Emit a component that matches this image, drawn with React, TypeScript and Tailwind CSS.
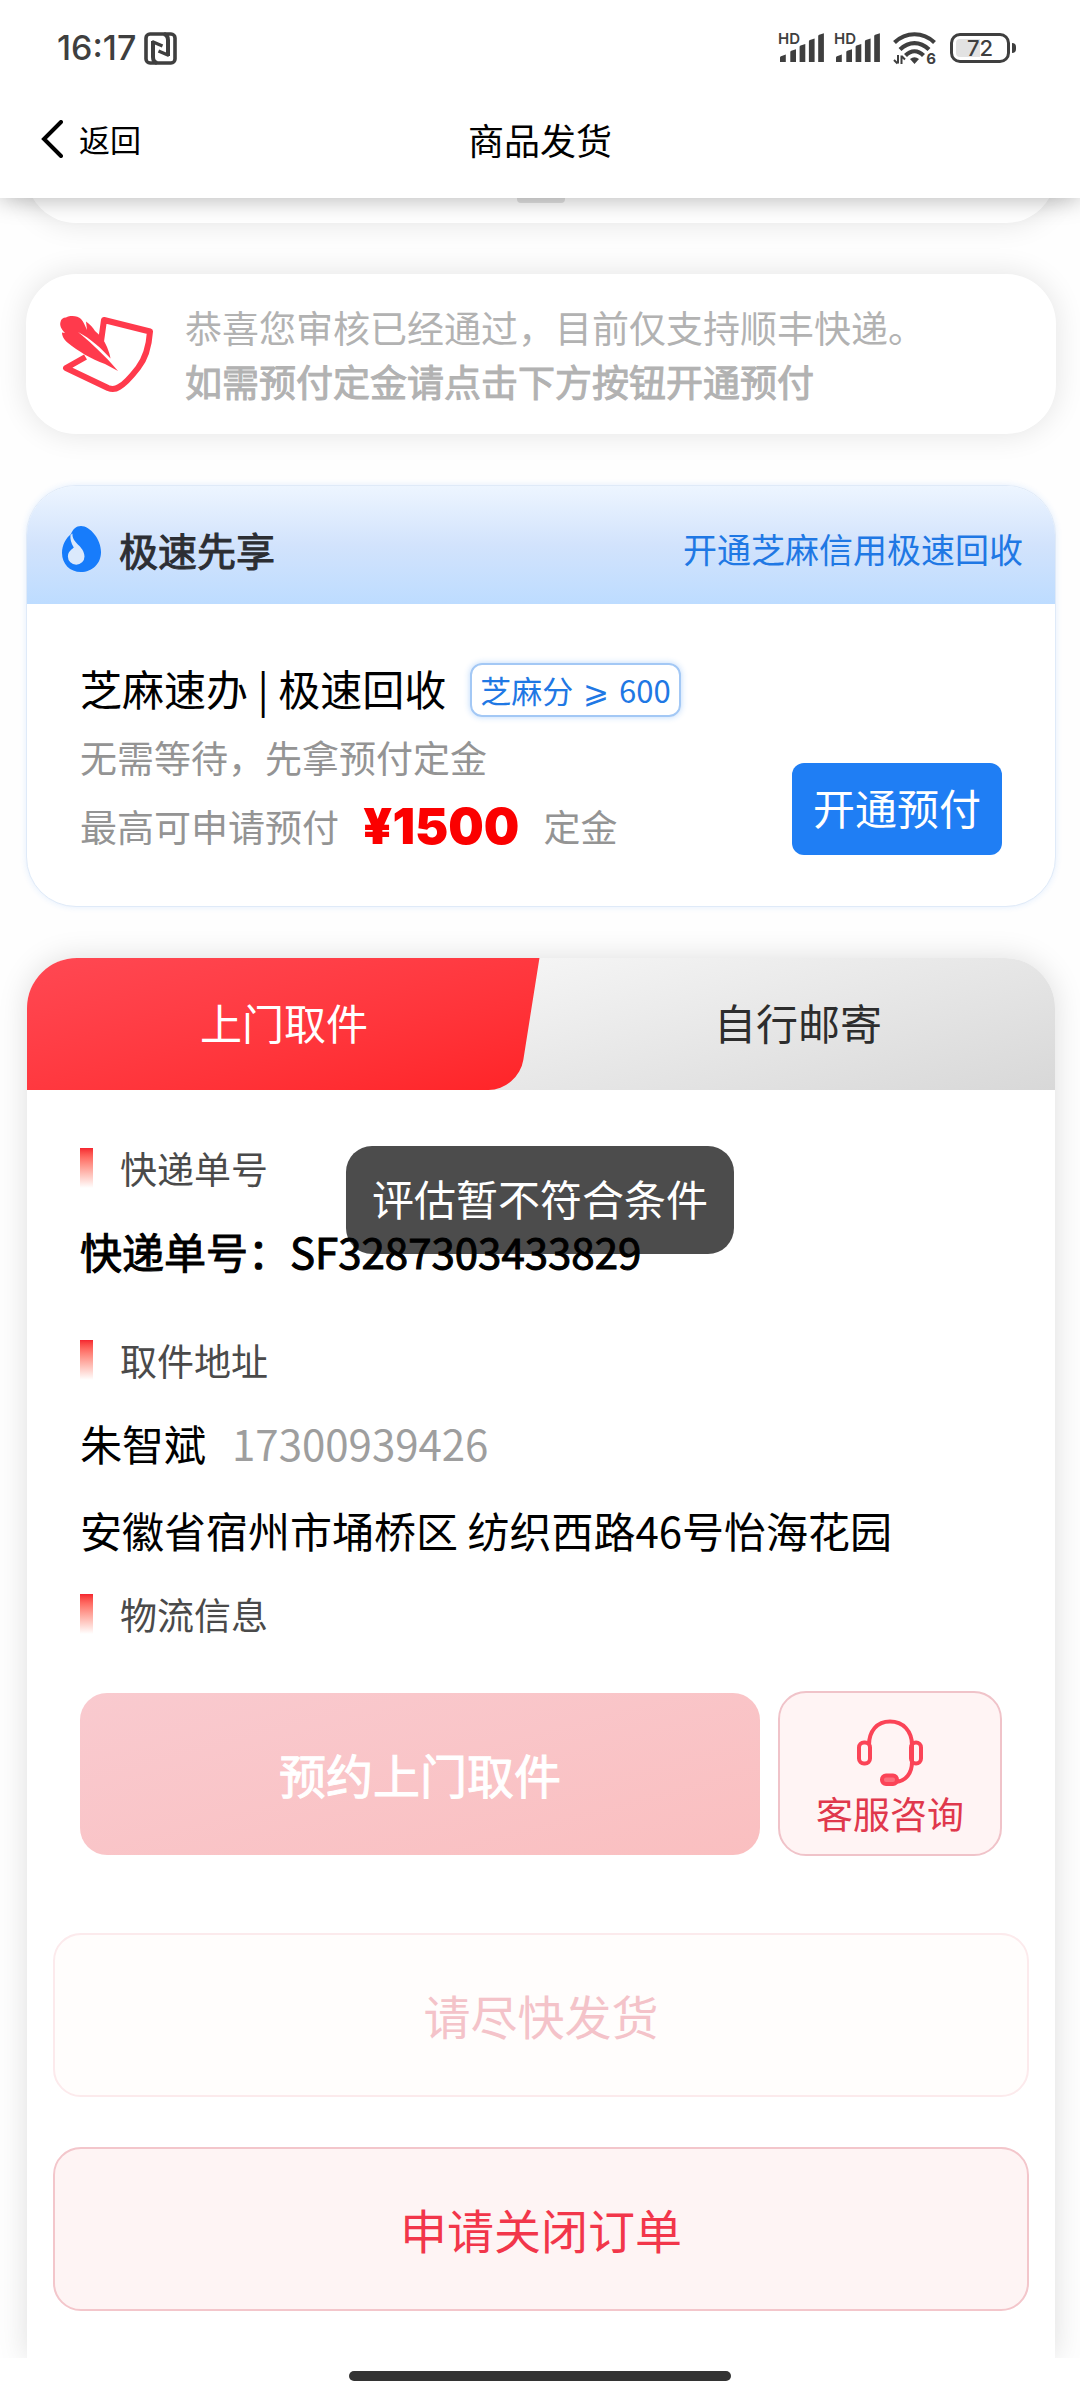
import React from "react";

function NfcIcon() {
  return (
    <svg width="33" height="33" viewBox="0 0 33 33" fill="none" stroke="#3f3f3f" aria-hidden="true">
      <rect x="2" y="2" width="29" height="29" rx="4" strokeWidth="3.6" />
      <path d="M9 9v16c0 3 1 5 4 6" strokeWidth="4" />
      <path d="M8 9.500l10.500 4.500" strokeWidth="3.400" />
      <path d="M24 24V8c0-3-1-5-4-6" strokeWidth="4" />
      <path d="M25 23.500l-10.500-4.500" strokeWidth="3.400" />
    </svg>
  );
}

function Signal() {
  return (
    <span className="relative block h-8 w-12">
      <span className="absolute -top-px left-0 font-[Inter] text-[15px] leading-[15px] font-semibold">HD</span>
      <svg width="48" height="32" viewBox="0 0 48 32" fill="#3f3f3f" aria-hidden="true">
        <path d="M2 30v-4.500q0-1 1-1.300l4.800-1.600V30z" />
        <path d="M12.300 30V20q0-1 1-1.300l4.700-1.500V30z" />
        <path d="M21.600 30V14.800q0-1 1-1.300l4.700-1.500V30z" />
        <path d="M30.900 30V9.400q0-1 1-1.300l4.700-1.500V30z" />
        <path d="M40.200 30V4q0-1 1-1.300l4.700-1.500V30z" />
      </svg>
    </span>
  );
}

function Wifi() {
  return (
    <span className="relative ml-[3px] block h-8 w-[43px]">
      <svg width="43" height="33" viewBox="0 0 43 33" fill="none" stroke="#3f3f3f" aria-hidden="true">
        <path d="M1.500 10.500C13-.5 30-.5 41.500 10.500" strokeWidth="4.200" />
        <path d="M7 17.500c9-8.500 20-8.500 29 0" strokeWidth="4.200" />
        <path d="M12.500 23.500c5.500-5.500 12.500-5.500 18 0" strokeWidth="4.200" />
        <path d="M21.500 32l-4.500-5q4.500-3.500 9 0z" fill="#3f3f3f" stroke="none" />
        <path d="M5 23v8.500M1 28l3.500 3.500M8.500 32v-8.500M12 27.500L8.500 24" strokeWidth="2" />
      </svg>
      <span className="absolute right-0 -bottom-0.5 font-[Inter] text-[15px] leading-[15px] font-bold">6</span>
    </span>
  );
}

function Battery() {
  return (
    <span className="ml-1.5 flex items-center gap-0.5">
      <span className="relative flex h-[30px] w-[60px] items-center justify-center rounded-[10px] border-[3px] border-[#3f3f3f]">
        <span className="absolute inset-y-[3px] left-[3px] w-6 rounded-l-[4px] bg-[#e2e2e2]" />
        <span className="relative font-[Inter] text-[22px] leading-6 font-medium">72</span>
      </span>
      <span className="h-[10px] w-1 rounded-r-sm bg-[#3f3f3f]" />
    </span>
  );
}

function FeatherIcon() {
  return (
    <svg width="94" height="78" viewBox="0 0 94 78" className="shrink-0" aria-hidden="true">
      <path
        d="M41.500 30L45 5 91 16.500C90 31 87 43 79 53 72 62 66 69 60 72Q55 75.500 49 73L7 53 26.500 42"
        fill="none"
        stroke="#ff3a4c"
        strokeWidth="6"
        strokeLinejoin="round"
      />
      <path
        d="M1.500 7C2 4 4 2.500 7 2.500 12 0 19 1 22 4c3 3 4 7 6 11L27 6.500c4 3 7 6 9 9.500 5 4 9 9 12 16 2 5 3 8 3.500 11.500C42 33 32 24 19 17c9 7 24 21 33 31l7 8-13-7C32 44 19 36 9 28 4 24 3 20 3 17.500L6 18C2 14 .5 10 1.500 7z"
        fill="#ff3a4c"
      />
    </svg>
  );
}

function DropIcon() {
  return (
    <svg width="39" height="46" viewBox="0 0 39 46" className="shrink-0" aria-hidden="true">
      <path d="M19 0C28 0 39 13 39 26 39 38 30 46 19 46 8 46 0 38 0 27 0 19 4 12 9 8 11 3 14 0 19 0z" fill="#177cfb" />
      <path d="M8.500 9L10.500 7.500C9.500 17 22.500 20 22.500 30.500a8.300 8.300 0 1 1-16.600 0C5.900 26 9 24 11.800 21.500 9 17 8 13 8.500 9z" fill="#dbe9fc" />
    </svg>
  );
}

function HeadsetIcon() {
  return (
    <svg width="66" height="68" viewBox="0 0 66 68" fill="none" stroke="#fb4457" strokeWidth="4" aria-hidden="true">
      <path d="M12 26C12 12 20 2.500 33 2.500S55 12 55 26v17c0 11-6 19-16 20" />
      <rect x="2" y="23.500" width="11" height="21" rx="5" />
      <rect x="54" y="23.500" width="10" height="21" rx="5" />
      <rect x="25" y="56.500" width="15" height="8.500" rx="4" fill="#fb6f7c" />
    </svg>
  );
}

function SectionLabel({ children }: { children: React.ReactNode }) {
  return (
    <h2 className="flex items-center text-[37px] leading-[54px] text-[#4a4a4a]">
      <span className="mr-[27px] h-10 w-[13px] bg-linear-to-b from-[#f5232f] to-white" />
      {children}
    </h2>
  );
}

export default function App() {
  return (
    <div className="relative flex min-h-screen flex-col overflow-hidden bg-[#fefefe] font-['Noto_Sans_CJK_SC',sans-serif] text-black">
      <header className="relative z-10 bg-white shadow-[0_2px_22px_rgba(0,0,0,0.28)]">
        <div className="flex h-24 items-center justify-between pr-16 pl-[57px] text-[#3f3f3f]">
          <div className="flex items-center gap-2">
            <time className="font-[Inter] text-[34px] leading-10 font-medium">16:17</time>
            <NfcIcon />
          </div>
          <div className="flex items-center gap-2">
            <Signal />
            <Signal />
            <Wifi />
            <Battery />
          </div>
        </div>
        <div className="grid h-[102px] grid-cols-[1fr_auto_1fr] items-center px-[41px] pb-4">
          <button type="button" className="flex items-center gap-4 text-[31px] leading-10">
            <svg width="22" height="38" viewBox="0 0 22 38" fill="none" stroke="#000" strokeWidth="4" strokeLinecap="round" aria-hidden="true">
              <path d="M20 2L3 19l17 17" />
            </svg>
            返回
          </button>
          <h1 className="text-[36px] leading-[54px]">商品发货</h1>
        </div>
      </header>

      <main className="flex grow flex-col gap-[51px] overflow-hidden pr-6 pl-[26px]">
        <div className="-mt-[103px] flex h-32 items-end justify-center rounded-[50px] bg-white pb-5 shadow-[0_0_30px_rgba(0,0,0,0.11)]">
          <span className="h-4 w-12 rounded-sm bg-[#e2e2e2]" />
        </div>

        <section className="flex items-center gap-8 rounded-[50px] bg-white px-[33px] py-[26px] shadow-[0_0_30px_rgba(0,0,0,0.11)]">
          <FeatherIcon />
          <p className="text-[37px] leading-[54px] text-[#b2b2b2]">
            恭喜您审核已经通过，目前仅支持顺丰快递。
            <strong className="block font-normal [-webkit-text-stroke:1px]">如需预付定金请点击下方按钮开通预付</strong>
          </p>
        </section>

        <section className="overflow-hidden rounded-[50px] border border-[#dfeaf8] bg-white shadow-[0_0_6px_rgba(30,126,243,0.12)]">
          <div className="flex h-[118px] items-center bg-linear-to-b from-[#edf5ff] via-[#d2e3fc] to-[#bddcff] pt-2 pr-8 pl-[35px]">
            <DropIcon />
            <h2 className="ml-[18px] text-[39px] leading-[54px] font-normal text-[#2c2e33] [-webkit-text-stroke:1px]">极速先享</h2>
            <a href="#credit" className="ml-auto text-[34px] leading-[54px] text-[#1f78e4]">
              开通芝麻信用极速回收
            </a>
          </div>
          <div className="px-[53px] pt-[60px] pb-[51px]">
            <div className="flex h-[52px] items-center">
              <h3 className="pb-1 text-[42px] leading-[52px]">芝麻速办 | 极速回收</h3>
              <span className="ml-6 rounded-xl border-2 border-[#a3c8f5] px-2 text-[31px] leading-[50px] text-[#1f78e4] shadow-[0_0_6px_rgba(30,126,243,0.3)]">
                芝麻分 <span className="mx-[3px]">⩾</span> 600
              </span>
            </div>
            <div className="mt-[14px] flex items-end justify-between text-[37px] text-[#949494]">
              <div className="flex flex-col gap-[13px]">
                <p className="leading-[54px]">无需等待，先拿预付定金</p>
                <p className="flex h-[58px] items-center leading-[58px]">
                  最高可申请预付
                  <strong className="mx-6 font-[Inter] text-[50px] leading-[58px] font-black text-[#fb0000]">¥1500</strong>
                  定金
                </p>
              </div>
              <button type="button" className="h-[92px] rounded-xl bg-[#1f7ef4] px-[21px] pb-1 text-[42px] leading-[60px] text-white">
                开通预付
              </button>
            </div>
          </div>
        </section>

        <section className="mx-px grow rounded-t-[50px] bg-white shadow-[0_0_30px_rgba(0,0,0,0.13)]">
          <div role="tablist" className="grid h-[132px] grid-cols-2 overflow-hidden rounded-t-[50px] text-[42px] leading-[60px]">
            <button type="button" role="tab" aria-selected="true" className="relative z-10 pb-1 text-white">
              <span className="absolute inset-y-0 right-3 -left-5 origin-center -skew-x-9 rounded-br-[30px] bg-linear-165 from-[#ff4853] to-[#ff2428]" />
              <span className="relative">上门取件</span>
            </button>
            <button type="button" role="tab" aria-selected="false" className="relative pb-1 text-[#2d2d2d]">
              <span className="absolute inset-y-0 right-0 -left-16 bg-linear-165 from-[#f6f6f6] to-[#d8d8d8]" />
              <span className="relative">自行邮寄</span>
            </button>
          </div>

          <div className="px-[53px] pt-[51px] text-[42px] leading-[60px]">
            <SectionLabel>快递单号</SectionLabel>
            <p className="mt-[26px] mb-[52px] [-webkit-text-stroke:1px]">快递单号：SF3287303433829</p>
            <SectionLabel>取件地址</SectionLabel>
            <p className="mt-[26px]">
              朱智斌<span className="ml-[26px] text-[#9e9e9e]">17300939426</span>
            </p>
            <p className="my-[27px]">安徽省宿州市埇桥区 纺织西路46号怡海花园</p>
            <SectionLabel>物流信息</SectionLabel>
            <div className="mt-[50px] flex items-center gap-[18px]">
              <button
                type="button"
                disabled
                className="h-[162px] grow rounded-[27px] bg-linear-165 from-[#f9cacf] to-[#fabfc0] text-[47px] text-white [-webkit-text-stroke:1px]"
              >
                预约上门取件
              </button>
              <button
                type="button"
                className="flex h-[165px] w-[224px] flex-col items-center rounded-[28px] border-2 border-[#f0c3c9] bg-[#fff4f4] pt-[26px] text-[37px] leading-[52px] text-[#e0384c]"
              >
                <HeadsetIcon />
                客服咨询
              </button>
            </div>
          </div>

          <div className="flex flex-col gap-[50px] px-[26px] pt-[77px] pb-[47px] text-[47px] leading-[60px]">
            <button type="button" disabled className="h-[164px] rounded-[28px] border-2 border-[#fceaec] bg-[#fffdfc] text-[#f4c3c9]">
              请尽快发货
            </button>
            <button type="button" className="h-[164px] rounded-[28px] border-2 border-[#f3c6cb] bg-[#fef4f4] text-[#f2364a]">
              申请关闭订单
            </button>
          </div>
        </section>
      </main>

      <footer className="flex h-[42px] justify-center bg-white pt-[13px]">
        <span className="h-[10px] w-[382px] rounded-full bg-[#333]" />
      </footer>

      <div role="status" className="absolute top-[1146px] left-1/2 z-20 -translate-x-1/2 rounded-[26px] bg-black/70 px-[26px] pt-[22px] pb-[26px] text-[42px] leading-[60px] whitespace-nowrap text-white">
        评估暂不符合条件
      </div>
    </div>
  );
}
